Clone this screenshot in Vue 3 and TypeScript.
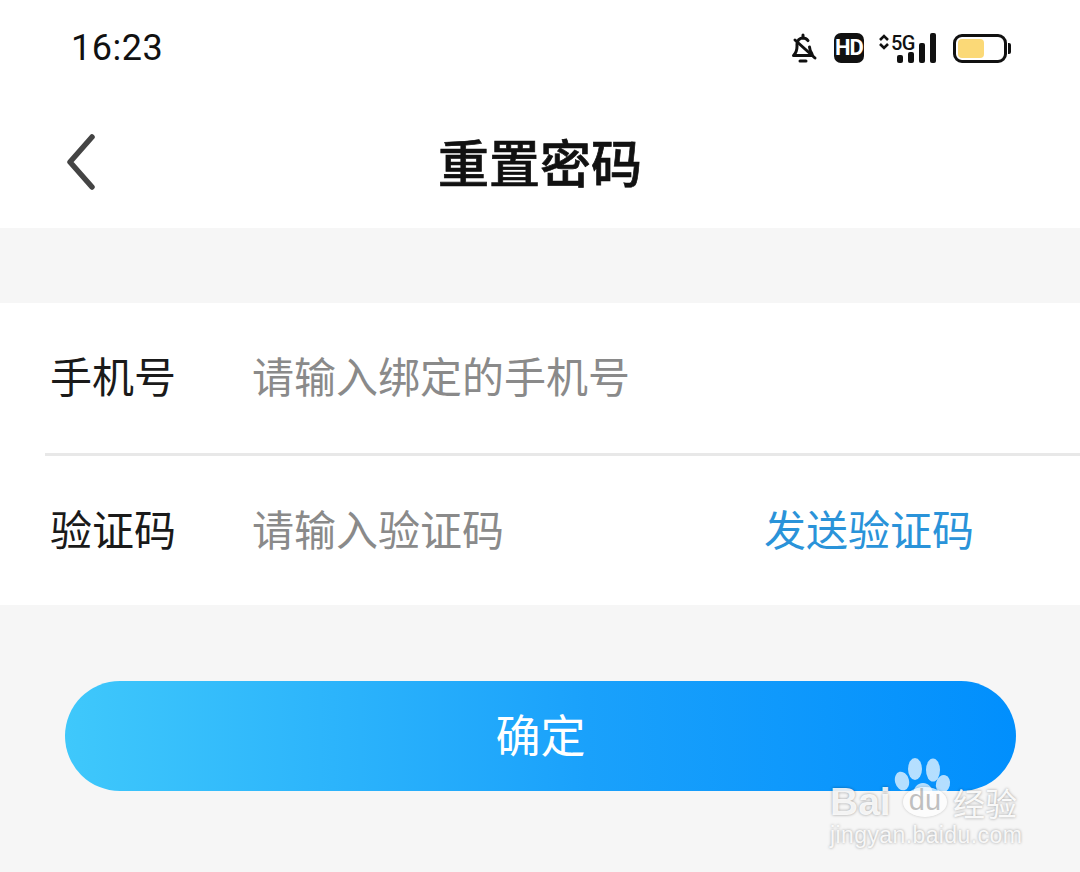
<template>
  <div class="page">
    <div class="status-bar">
      <span class="time">16:23</span>
      <div class="status-icons">
        <svg class="bell" viewBox="0 0 28 32" width="28" height="32">
          <path d="M3.500 23.500c2.500-2.500 3.500-5 3.500-9v-2.500c0-3.500 2.800-6 6-6 2 0 3.800 1 5 2.600M19.500 15c.2 2.500 1 5 2.500 7M3.500 23.500h19" fill="none" stroke="#111" stroke-width="3" stroke-linejoin="round" stroke-linecap="round"/>
          <path d="M13 3v3M10 29h6M5 8l20 18" fill="none" stroke="#111" stroke-width="3" stroke-linecap="round"/>
        </svg>
        <span class="hd">HD</span>
        <div class="signal">
          <svg class="arrows" viewBox="0 0 10 16" width="10" height="16">
            <path d="M1 6l4-4 4 4M1 10l4 4 4-4" fill="none" stroke="#111" stroke-width="2.600"/>
          </svg>
          <span class="five-g">5G</span>
          <div class="bars">
            <i v-for="h in barHeights" :key="h" :style="{ height: h + 'px' }"></i>
          </div>
        </div>
        <div class="battery">
          <div class="battery-body"><div class="battery-fill"></div></div>
          <div class="battery-cap"></div>
        </div>
      </div>
    </div>

    <div class="nav-bar">
      <svg class="back" viewBox="0 0 30 60" width="30" height="60">
        <path d="M27 5L5 30l22 25" fill="none" stroke="#444" stroke-width="5.500" stroke-linecap="round" stroke-linejoin="round"/>
      </svg>
      <span class="title">重置密码</span>
    </div>

    <div class="form">
      <div class="row">
        <span class="label">手机号</span>
        <span class="placeholder">请输入绑定的手机号</span>
      </div>
      <div class="row">
        <span class="label">验证码</span>
        <span class="placeholder">请输入验证码</span>
        <span class="send">发送验证码</span>
      </div>
    </div>

    <div class="submit-wrap">
      <div class="submit">确定</div>
    </div>

    <!-- 水印 -->
    <div class="watermark">
      <svg class="paw" viewBox="0 0 60 44" width="60" height="44">
        <g fill="#fff" fill-opacity="0.7">
          <ellipse cx="9" cy="25" rx="7" ry="9.500" transform="rotate(-15 9 25)"/>
          <ellipse cx="22" cy="13" rx="7" ry="11"/>
          <ellipse cx="40" cy="14" rx="7" ry="11.500"/>
          <ellipse cx="50" cy="28" rx="7" ry="9" transform="rotate(15 50 28)"/>
          <path d="M20 40c0-8 4-13 10-13s10 5 10 13z"/>
        </g>
      </svg>
      <div class="wm-brand">
        <span class="wm-bai">Bai</span>
        <span class="wm-du">du</span>
        <span class="wm-cn">经验</span>
      </div>
      <div class="wm-url">jingyan.baidu.com</div>
    </div>
  </div>
</template>

<script setup lang="ts">
const barHeights: number[] = [8, 11, 20, 30]
</script>

<style>
html,
body {
  margin: 0;
  background: #f6f6f6;
}
</style>

<style scoped>
.page {
  position: relative;
  width: 1080px;
  height: 872px;
  overflow: hidden;
  background: #f6f6f6;
  font-family: "Noto Sans CJK SC", "Noto Sans", sans-serif;
}

.status-bar {
  height: 96px;
  box-sizing: border-box;
  padding: 0 69px 0 71px;
  background: #fff;
  display: flex;
  align-items: center;
  justify-content: space-between;
}

.time {
  font-family: Roboto, sans-serif;
  font-size: 36px;
  letter-spacing: 0.5px;
  color: #111;
}

.status-icons {
  display: flex;
  align-items: center;
}

.bell {
  margin-right: 16px;
}

.hd {
  width: 30px;
  height: 30px;
  margin-right: 15px;
  border-radius: 7px;
  background: #111;
  color: #fff;
  font-family: Roboto, sans-serif;
  font-size: 22px;
  font-weight: 700;
  line-height: 30px;
  text-align: center;
  letter-spacing: -1px;
}

.signal {
  position: relative;
  width: 57px;
  height: 32px;
  margin-right: 17px;
}

.arrows {
  position: absolute;
  left: 0;
  top: 2px;
}

.five-g {
  position: absolute;
  left: 12px;
  top: 1px;
  font-family: Roboto, sans-serif;
  font-size: 20px;
  font-weight: 500;
  letter-spacing: -0.5px;
  line-height: 20px;
  color: #111;
}

.bars {
  position: absolute;
  right: 0;
  bottom: 1px;
  display: flex;
  align-items: flex-end;
  gap: 5px;
}

.bars i {
  display: block;
  width: 6px;
  border-radius: 2px;
  background: #111;
}

.battery {
  display: flex;
  align-items: center;
}

.battery-body {
  width: 54px;
  height: 29px;
  box-sizing: border-box;
  padding: 2px;
  border: 3px solid #111;
  border-radius: 9px;
}

.battery-fill {
  width: 26px;
  height: 100%;
  border-radius: 4px;
  background: #fbd977;
}

.battery-cap {
  width: 3px;
  height: 11px;
  margin-left: 1px;
  border-radius: 0 2px 2px 0;
  background: #111;
}

.nav-bar {
  position: relative;
  height: 132px;
  background: #fff;
  display: flex;
  align-items: center;
  justify-content: center;
}

.back {
  position: absolute;
  left: 65px;
  top: 36px;
}

.title {
  font-size: 51px;
  font-weight: 500;
  -webkit-text-stroke: 0.7px #111;
  color: #111;
  position: relative;
  top: -1px;
}

.form {
  margin-top: 75px;
  background: #fff;
}

.row {
  height: 150px;
  box-sizing: border-box;
  margin-left: 45px;
  padding: 0 106px 7px 5px;
  display: flex;
  align-items: center;
  font-size: 42px;
}

.row + .row {
  height: 152px;
  border-top: 3px solid #e8e8e8;
}

.label {
  width: 202px;
  color: #1a1a1a;
}

.placeholder {
  flex: 1;
  color: #8a8a8a;
}

.send {
  color: #2a93d9;
}

.submit-wrap {
  padding: 76px 64px 0 65px;
}

.submit {
  height: 110px;
  border-radius: 55px;
  background: linear-gradient(90deg, #3fc8fb 0%, #1aa1fb 55%, #018ffd 100%);
  color: #fff;
  font-size: 45px;
  line-height: 106px;
  text-align: center;
}

.watermark {
  position: absolute;
  left: 828px;
  top: 756px;
  width: 200px;
  color: #fff;
}

.paw {
  position: absolute;
  left: 65px;
  top: 0;
}

.wm-brand {
  position: absolute;
  left: 2px;
  top: 28px;
  display: flex;
  align-items: center;
  white-space: nowrap;
}

.wm-bai {
  width: 73px;
  font-family: "Liberation Sans", sans-serif;
  font-size: 39px;
  font-weight: 700;
  line-height: 36px;
  color: rgba(255, 255, 255, 0.9);
  text-shadow: 0 0 3px rgba(0, 0, 0, 0.38);
}

.wm-du {
  width: 44px;
  height: 30px;
  border-radius: 50%;
  background: rgba(255, 255, 255, 0.68);
  box-shadow: 0 0 3px rgba(0, 0, 0, 0.2);
  color: rgba(150, 150, 150, 0.6);
  font-family: "Liberation Sans", sans-serif;
  font-size: 29px;
  line-height: 27px;
  text-align: center;
}

.wm-cn {
  margin-left: 6px;
  font-family: "Noto Sans CJK SC", sans-serif;
  font-size: 32px;
  line-height: 36px;
  color: rgba(255, 255, 255, 0.92);
  text-shadow: 0 0 3px rgba(0, 0, 0, 0.38);
}

.wm-url {
  position: absolute;
  left: 2px;
  top: 66px;
  white-space: nowrap;
  font-family: "Liberation Sans", sans-serif;
  font-size: 23px;
  letter-spacing: 0.4px;
  color: rgba(255, 255, 255, 0.88);
  text-shadow: 0 0 3px rgba(0, 0, 0, 0.38);
}
</style>
